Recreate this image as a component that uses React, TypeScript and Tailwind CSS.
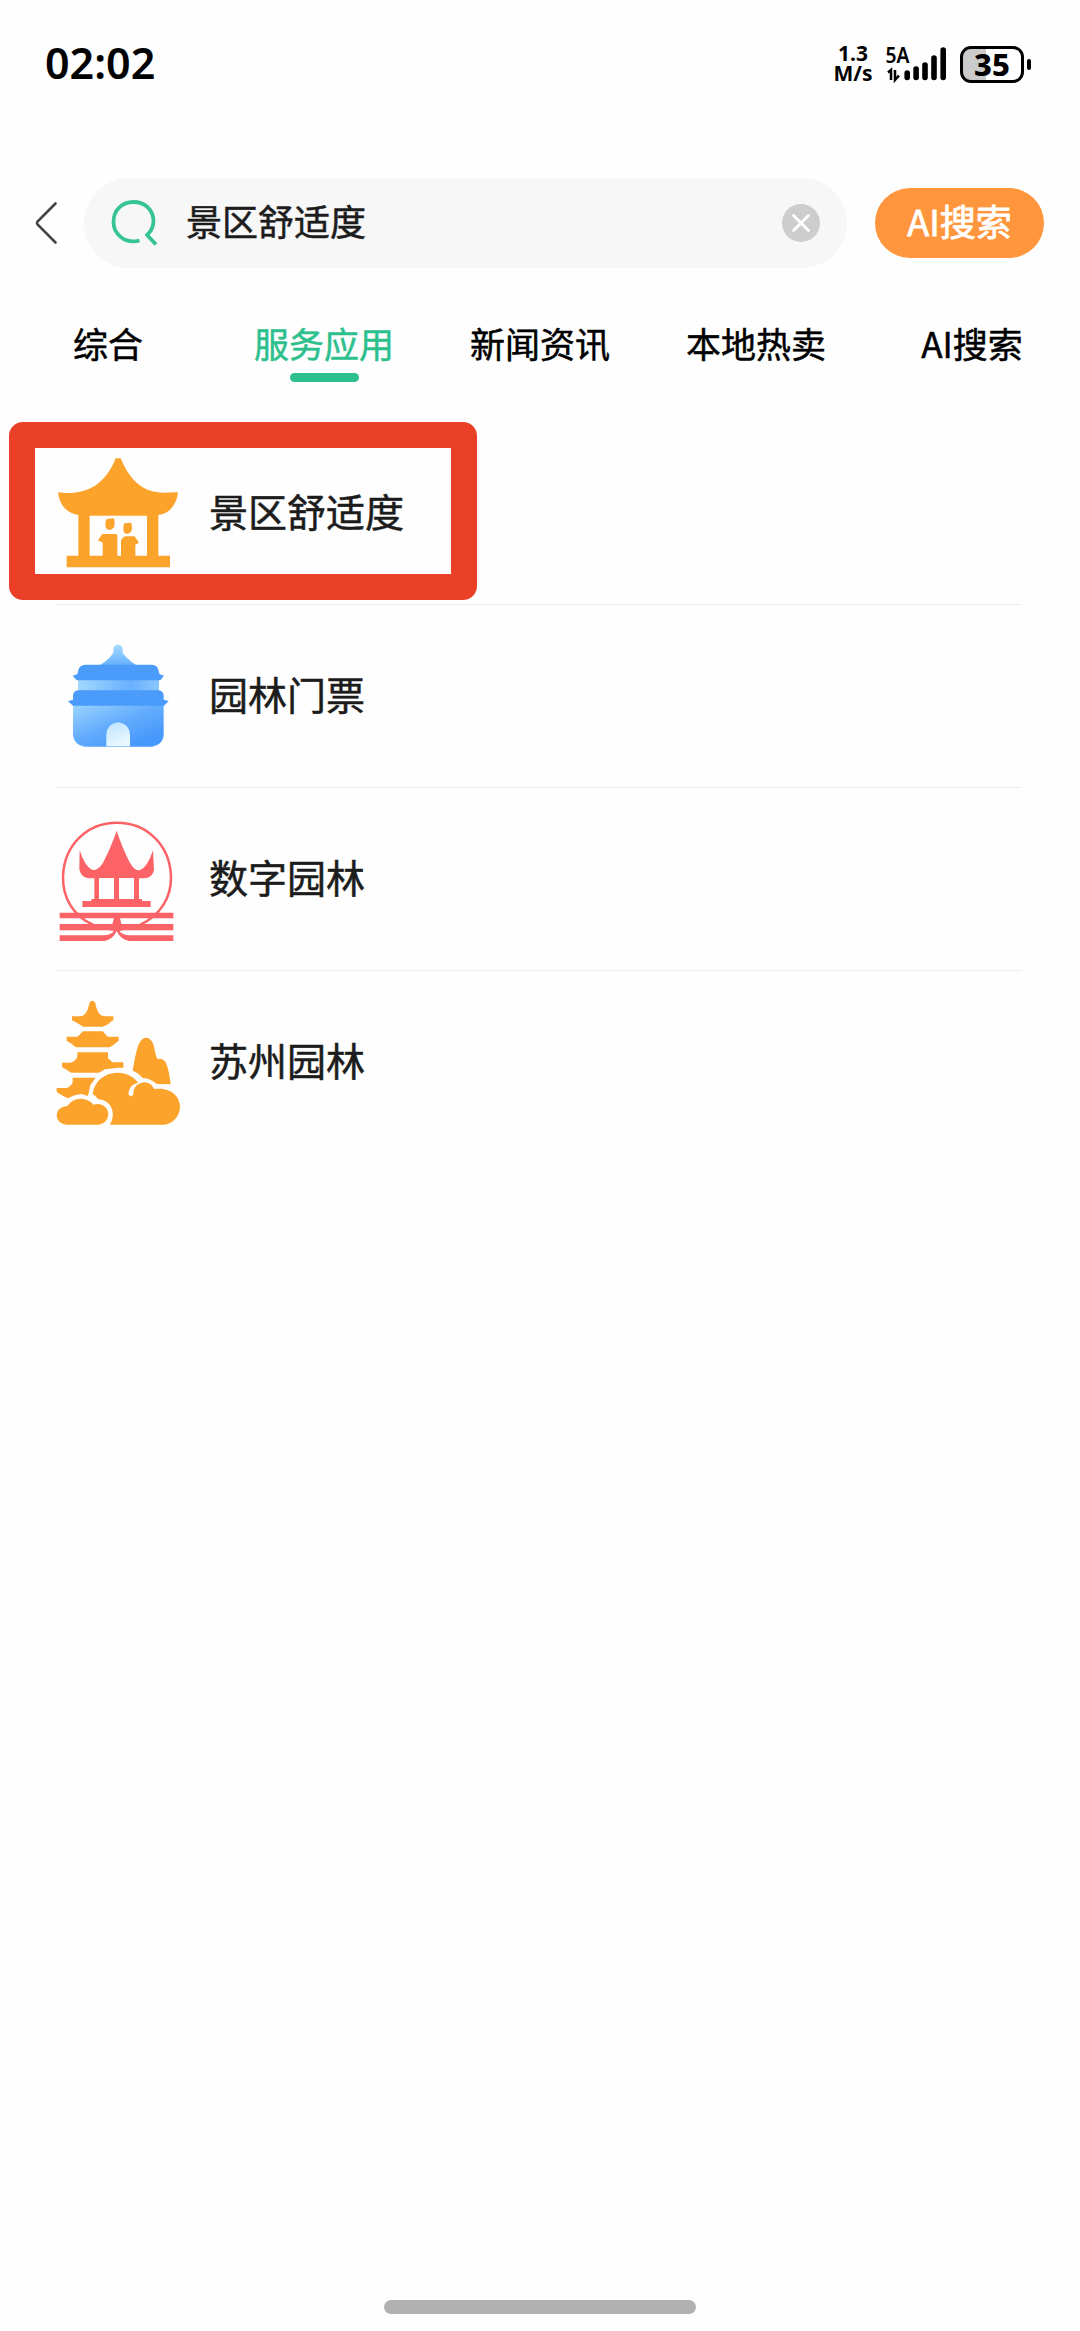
import React from "react";

const PavilionIcon = () => (
  <svg className="size-[124px] shrink-0 overflow-visible" viewBox="48 33 372 372" fill="#fca32c">
    <path d="M227 55H242C258 92 290 158 368 158L414 157C410 194 388 222 355 225V347H390V382H80V347H115V225C78 220 58 192 54 157C72 159 85 160 102 158C172 152 208 104 227 55Z" />
    <path d="M149 227H321V347H149Z" fill="#fefefe" />
    <path d="M200 237L222 235Q226 252 222 262Q210 277 198 264Q193 250 200 237Z" />
    <path d="M253 250L274 248Q278 264 274 274Q263 289 251 276Q247 262 253 250Z" />
    <path d="M187 282H228Q232 282 232 288V350H188V308L174 301Z" />
    <path d="M251 291Q255 288 260 289H284L297 308L286 314V350H243V300Z" />
  </svg>
);

const GateIcon = () => (
  <svg className="size-[124px] shrink-0 overflow-visible" viewBox="18 10 372 372">
    <defs>
      <linearGradient id="gateTop" x1="0" y1="0" x2="0" y2="1">
        <stop offset="0" stopColor="#a5dcfe" />
        <stop offset="1" stopColor="#67b0fd" />
      </linearGradient>
      <linearGradient id="gateBand" x1="0" y1="0" x2="1" y2="0">
        <stop offset="0" stopColor="#a3d8fe" />
        <stop offset="0.65" stopColor="#68b0fd" />
        <stop offset="1" stopColor="#8cc7fe" />
      </linearGradient>
      <linearGradient id="gateBody" x1="0" y1="0" x2="0.75" y2="0.9">
        <stop offset="0" stopColor="#9ed5fe" />
        <stop offset="0.55" stopColor="#64adfd" />
        <stop offset="1" stopColor="#4798fc" />
      </linearGradient>
      <linearGradient id="gateDoor" x1="0" y1="0" x2="0.3" y2="1">
        <stop offset="0" stopColor="#bde4fe" />
        <stop offset="1" stopColor="#e9f7ff" />
      </linearGradient>
    </defs>
    <path d="M190 55Q192 42 204 42Q217 42 218 55V66Q232 86 258 103H150Q177 87 190 66Z" fill="url(#gateTop)" />
    <rect x="84" y="140" width="243" height="48" fill="url(#gateBand)" />
    <path d="M69 218H341V315Q337 343 306 348H104Q74 343 69 315Z" fill="url(#gateBody)" />
    <path d="M105 102H306Q321 103 324 115L329 131L342 135L331 149H80L68 135L82 131L86 115Q91 103 105 102Z" fill="#4b9bfb" />
    <path d="M84 179H326Q339 180 341 194V207L356 211L342 225H69L54 212L69 207V194Q71 181 84 179Z" fill="#4b9bfb" />
    <path d="M169 347V312Q172 278 204 275Q237 278 240 312V347Z" fill="url(#gateDoor)" />
  </svg>
);

const DigitalGardenIcon = () => (
  <svg className="size-[124px] shrink-0 overflow-visible" viewBox="18 21 372 372" fill="#fc6366">
    <path
      d="M130 345C68 317 38 262 39 200C42 105 111 38 201 38C291 38 360 105 363 200C364 262 332 316 270 345"
      fill="none"
      stroke="#fc6366"
      strokeWidth="7.500"
    />
    <path d="M200 62C208 88 228 137 240 158Q252 181 269 181Q292 173 309 121L312 180Q308 202 285 205H267V267H276V273H302V291H97V273H124V267H133V205H115Q93 202 88 178L89 121Q105 171 128 180Q145 181 159 158C172 135 191 89 200 62Z" />
    <path d="M147 204H192V267H147ZM207 204H252V267H207Z" fill="#fefefe" />
    <path d="M29 308H370V325H210L214 342H370V361H224L208 363Q219 376 239 376H370V393H238Q211 388 200 363Q189 388 163 393H29V376H161Q181 376 192 363L176 361H29V342H187L192 325H29Z" />
  </svg>
);

const GardenIcon = () => (
  <svg className="size-[124px] shrink-0 overflow-visible" viewBox="18 30 372 372" fill="#fca32c">
    <path d="M118 39Q127 26 136 39C140 62 147 76 163 79H190V91Q180 96 175 103L158 110H100Q91 105 83 100L66 91V79H92C108 76 115 58 118 39Z" />
    <path d="M99 124H158L173 140H206V152L187 167L178 172H78Q71 169 67 163L50 152V140H83Z" />
    <path d="M82 187H174V205L188 217H220V233H205L165 238L147 248H64L36 231V218H61Q78 212 82 200Z" />
    <path d="M68 263H137L121 286L114 318L95 312L74 316L53 325L34 315L20 306V294H50Q66 287 68 276Z" />
    <path d="M248 242C254 216 260 151 283 144Q296 140 305 153C314 166 314 190 322 207Q338 203 345 214C356 234 359 260 362 283L320 282Q298 263 279 265L262 249Z" />
    <path d="M128 312C133 272 164 249 202 248C235 249 255 264 264 278Q237 284 235 313Q242 322 249 316Q252 281 282 277Q303 278 312 297C355 291 390 313 390 351C389 380 367 403 342 404H180Q193 381 186 357Q176 330 144 327Q137 317 128 312Z" />
    <path d="M251 315Q248 300 260 286Q282 271 303 284L313 299L301 305L285 304L270 318Z" />
    <path d="M52 348Q66 327 91 326Q118 327 130 344C156 337 175 353 175 373Q173 400 147 404H49Q23 401 20 378Q20 351 52 348Z" />
  </svg>
);

const tabs = ["综合", "服务应用", "新闻资讯", "本地热卖", "AI搜索"];

const services = [
  { name: "景区舒适度", icon: <PavilionIcon />, marked: true },
  { name: "园林门票", icon: <GateIcon /> },
  { name: "数字园林", icon: <DigitalGardenIcon /> },
  { name: "苏州园林", icon: <GardenIcon /> },
];

const StatusBar = () => (
  <div className="flex h-[128px] items-center justify-between pl-[45px] pr-[49px] font-['Noto_Sans',sans-serif] text-black">
    <span className="pb-[3px] text-[43px] font-semibold leading-none">02:02</span>
    <div className="flex h-[38px] items-center">
      {/* Network speed */}
      <div className="flex w-[40px] flex-col items-center pb-[2px] text-[21px] font-bold leading-[20px]">
        <span>1.3</span>
        <span>M/s</span>
      </div>
      {/* Signal */}
      <svg className="ml-[11px] h-[38px] w-[64px] overflow-visible" viewBox="884 45 64 38">
        <text x="885.5" y="63" fontSize="22" fontWeight="600" textLength="24" lengthAdjust="spacingAndGlyphs">
          5A
        </text>
        <path d="M888 72.500L891 70V80M895 70V80L899 75.500" fill="none" stroke="#000" strokeWidth="2.500" />
        <path
          d="M907.200 73V77.500M916.100 69V77.500M925 65V77.500M934 58V77.500M943.200 50V77.500"
          fill="none"
          stroke="#000"
          strokeWidth="5.600"
          strokeLinecap="round"
        />
      </svg>
      {/* Battery */}
      <div className="ml-[12px] flex items-center gap-[3px]">
        <div className="flex h-[37px] w-[64px] items-center justify-center rounded-[11px] border-[3px] border-black bg-linear-to-r from-[#cbcbcb] from-40% to-white to-40%">
          <span className="text-[31px] font-extrabold leading-none">35</span>
        </div>
        <div className="h-[11px] w-1 rounded-full bg-black" />
      </div>
    </div>
  </div>
);

const SearchHeader = () => (
  <div className="mt-[50px] flex h-[90px] items-center pl-[34px] pr-9">
    <svg className="h-[44px] w-6 shrink-0" viewBox="0 0 24 44" fill="none" stroke="#444" strokeWidth="2.600">
      <path d="M21.500 2.500L3.500 20.500Q2.300 22 3.500 23.500L21.500 41.500" strokeLinecap="round" />
    </svg>
    <div className="ml-[26px] flex h-[90px] w-[763px] items-center rounded-full bg-[#f7f7f7] pl-[26px] pr-[27px]">
      <svg className="size-[48px]" viewBox="109 199 48 48" fill="none" stroke="#36c492" strokeWidth="3.800">
        <path d="M138.500 240.500C124 244.500 112.500 234 112.500 222C112.500 210 121 202 132.500 202C144 202 152.500 210 152.500 221.500Q152 230 146 235L155 244.500" strokeLinejoin="round" />
      </svg>
      <span className="mb-[7px] ml-[28px] text-[36px] leading-none text-[#1c1c1c] [-webkit-text-stroke:0.5px]">
        景区舒适度
      </span>
      <svg className="ml-auto size-[38px]" viewBox="0 0 38 38">
        <circle cx="19" cy="19" r="19" fill="#cdcdcd" />
        <path d="M11.500 11.500L26.500 26.500M26.500 11.500L11.500 26.500" stroke="#fff" strokeWidth="2.800" strokeLinecap="round" />
      </svg>
    </div>
    <button className="ml-[28px] h-[70px] w-[169px] rounded-full bg-[#ff963d] pb-[7px] text-[36px] leading-none text-white [-webkit-text-stroke:0.8px]">
      AI搜索
    </button>
  </div>
);

const App = () => {
  return (
    <div className="flex h-[2331px] w-[1080px] flex-col bg-[#fefefe] font-['Noto_Sans_CJK_SC',sans-serif]">
      <StatusBar />
      <SearchHeader />

      {/* Tabs */}
      <div className="mt-[57px] grid grid-cols-5">
        {tabs.map((tab, i) => (
          <div key={tab} className="flex flex-col items-center">
            <span
              className={`text-[35px] leading-[35px] [-webkit-text-stroke:0.5px] ${
                i === 1 ? "text-[#2dc08d]" : "text-black"
              }`}
            >
              {tab}
            </span>
            {i === 1 && <div className="mt-[13px] h-[9px] w-[69px] rounded-full bg-[#2dc08d]" />}
          </div>
        ))}
      </div>

      {/* Results */}
      <ul className="mt-[40px] pl-[56px] pr-[58px]">
        {services.map((item) => (
          <li
            key={item.name}
            className="relative flex h-[183px] items-center gap-[29px] border-b border-[#eeeeee] last:border-transparent"
          >
            {item.icon}
            <span className="mb-[6px] text-[39px] leading-none text-[#1c1c1c] [-webkit-text-stroke:0.5px]">
              {item.name}
            </span>
            {item.marked && (
              <div className="absolute -left-[47px] top-0 h-[178px] w-[468px] rounded-[14px] border-[26px] border-[#ea4028]" />
            )}
          </li>
        ))}
      </ul>

      {/* Home indicator */}
      <div className="mx-auto mb-[17px] mt-auto h-[14px] w-[312px] rounded-full bg-[#b1b1b1]" />
    </div>
  );
};

export default App;
